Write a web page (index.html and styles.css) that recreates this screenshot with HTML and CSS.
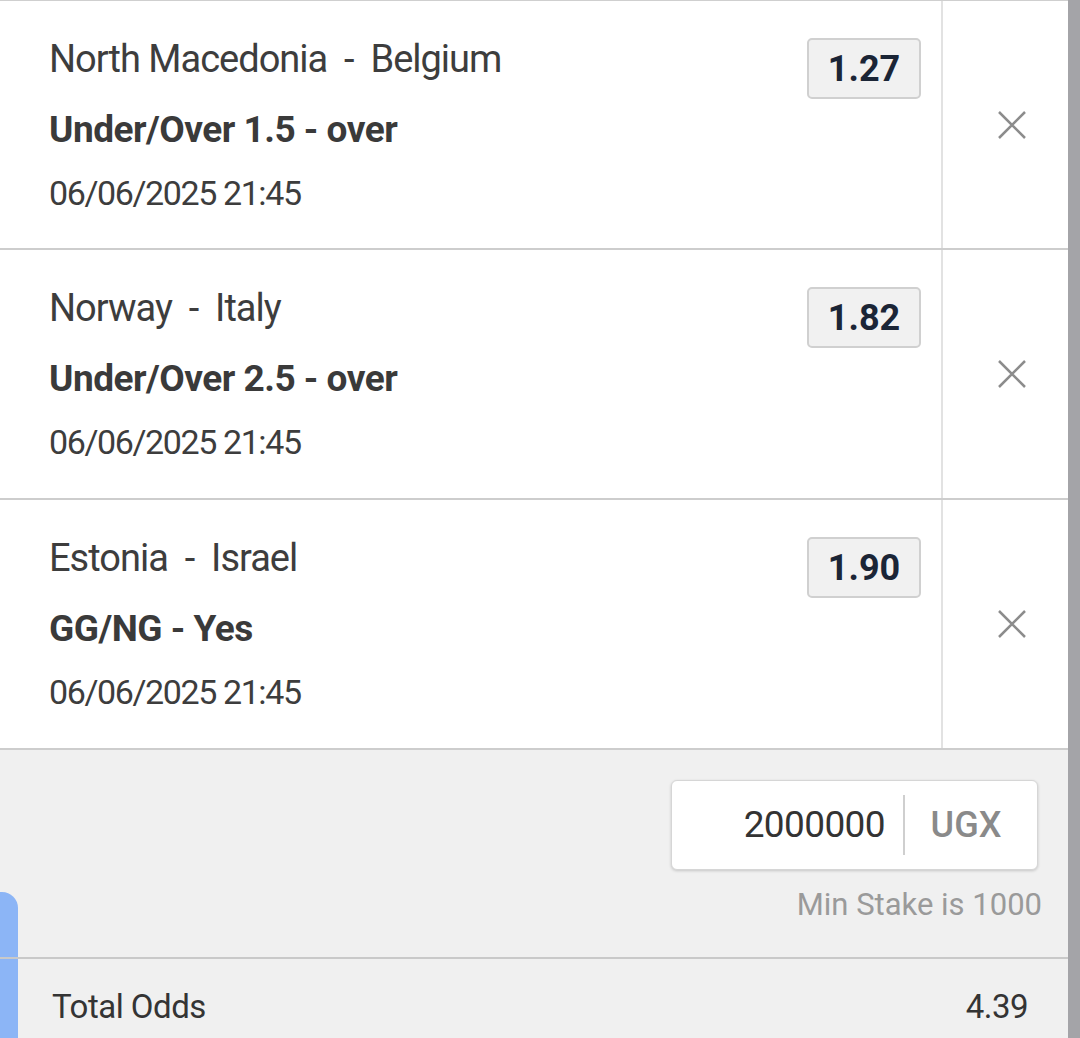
FILE: index.html
```html
<!DOCTYPE html>
<html lang="en">
<head>
  <meta charset="UTF-8">
  <title>Betslip</title>
  <link rel="stylesheet" href="styles.css">
</head>
<body>
  <div class="screen">
    <div class="slip">
      <!-- Selections -->
      <div class="bet">
        <div class="bet-main">
          <div class="bet-info">
            <div class="match">North Macedonia&nbsp; -&nbsp; Belgium</div>
            <div class="market">Under/Over 1.5 - over</div>
            <div class="date">06/06/2025 21:45</div>
          </div>
          <div class="odds">1.27</div>
        </div>
        <div class="bet-remove">
          <svg class="close-icon" viewBox="0 0 30 30"><path d="M2 2 L28 28 M28 2 L2 28"/></svg>
        </div>
      </div>

      <div class="bet">
        <div class="bet-main">
          <div class="bet-info">
            <div class="match">Norway&nbsp; -&nbsp; Italy</div>
            <div class="market">Under/Over 2.5 - over</div>
            <div class="date">06/06/2025 21:45</div>
          </div>
          <div class="odds">1.82</div>
        </div>
        <div class="bet-remove">
          <svg class="close-icon" viewBox="0 0 30 30"><path d="M2 2 L28 28 M28 2 L2 28"/></svg>
        </div>
      </div>

      <div class="bet">
        <div class="bet-main">
          <div class="bet-info">
            <div class="match">Estonia&nbsp; -&nbsp; Israel</div>
            <div class="market">GG/NG - Yes</div>
            <div class="date">06/06/2025 21:45</div>
          </div>
          <div class="odds">1.90</div>
        </div>
        <div class="bet-remove">
          <svg class="close-icon" viewBox="0 0 30 30"><path d="M2 2 L28 28 M28 2 L2 28"/></svg>
        </div>
      </div>

      <!-- Stake + totals -->
      <div class="footer">
        <div class="blue-tab"></div>
        <div class="stake">
          <div class="stake-input">
            <div class="stake-amount">2000000</div>
            <div class="stake-currency">UGX</div>
          </div>
          <div class="stake-hint">Min Stake is 1000</div>
        </div>
        <div class="totals">
          <span>Total Odds</span>
          <span>4.39</span>
        </div>
      </div>
    </div>
    <div class="scrollbar"></div>
  </div>
</body>
</html>
```

FILE: styles.css
```css
body {
  margin: 0;
  font-family: Roboto, 'Liberation Sans', sans-serif;
  background: #fff;
  color: #3b3b3b;
}
.screen {
  display: flex;
  height: 1038px;
  overflow: hidden;
}
.slip {
  flex: 1;
  border-top: 1px solid #cfcfcf;
  display: flex;
  flex-direction: column;
}
.scrollbar {
  width: 12px;
  background: #a4a4a8;
}
.bet {
  display: grid;
  grid-template-columns: 1fr 127px;
  height: 249px;
  box-sizing: border-box;
  border-bottom: 2px solid #cdcdcd;
}
.bet + .bet {
  height: 250px;
}
.bet-main {
  display: flex;
  justify-content: space-between;
  align-items: flex-start;
  padding: 36px 20px 0 49px;
}
.match {
  font-size: 38px;
  line-height: 44px;
  letter-spacing: -1px;
  color: #3d3d3d;
}
.market {
  font-size: 37px;
  line-height: 44px;
  letter-spacing: -0.5px;
  font-weight: bold;
  color: #3a3a3a;
  margin-top: 27px;
}
.date {
  font-size: 34px;
  line-height: 44px;
  letter-spacing: -1.4px;
  color: #3d3d3d;
  margin-top: 19px;
}
.odds {
  width: 114px;
  height: 61px;
  margin-top: 1px;
  box-sizing: border-box;
  border: 2px solid #d0d0d0;
  border-radius: 5px;
  background: #f1f1f1;
  color: #1b2536;
  font-size: 36px;
  font-weight: bold;
  display: flex;
  align-items: center;
  justify-content: center;
}
.bet-remove {
  border-left: 2px solid #e2e2e2;
  display: flex;
  align-items: center;
  justify-content: center;
  padding-left: 12px;
}
.close-icon {
  width: 30px;
  height: 30px;
  stroke: #8c8c8c;
  stroke-width: 2.5;
  fill: none;
}
.footer {
  flex: 1;
  background: #f0f0f0;
  position: relative;
}
.blue-tab {
  position: absolute;
  left: 0;
  top: 142px;
  bottom: 0;
  width: 18px;
  background: #8cb5f6;
  border-radius: 0 16px 0 0;
}
.stake {
  display: flex;
  flex-direction: column;
  align-items: flex-end;
  padding: 30px 26px 0 0;
  height: 207px;
  box-sizing: border-box;
}
.stake-input {
  display: flex;
  width: 367px;
  height: 90px;
  box-sizing: border-box;
  margin-right: 4px;
  background: #fff;
  border: 1px solid #d6d6d6;
  border-radius: 6px;
  box-shadow: 0 1px 3px rgba(0, 0, 0, 0.18);
  align-items: center;
}
.stake-amount {
  width: 233px;
  box-sizing: border-box;
  padding-right: 18px;
  text-align: right;
  font-size: 37px;
  letter-spacing: -0.6px;
  color: #333;
  border-right: 2px solid #cfcfcf;
  height: 60px;
  line-height: 60px;
}
.stake-currency {
  flex: 1;
  text-align: center;
  padding-right: 10px;
  font-size: 36px;
  font-weight: 500;
  color: #8a8a8a;
}
.stake-hint {
  margin-top: 16px;
  font-size: 31px;
  color: #9a9a9a;
}
.totals {
  position: relative;
  display: flex;
  justify-content: space-between;
  border-top: 2px solid #c9c9c9;
  padding: 28px 40px 0 52px;
  font-size: 33px;
  letter-spacing: -0.5px;
  color: #343434;
}
```
